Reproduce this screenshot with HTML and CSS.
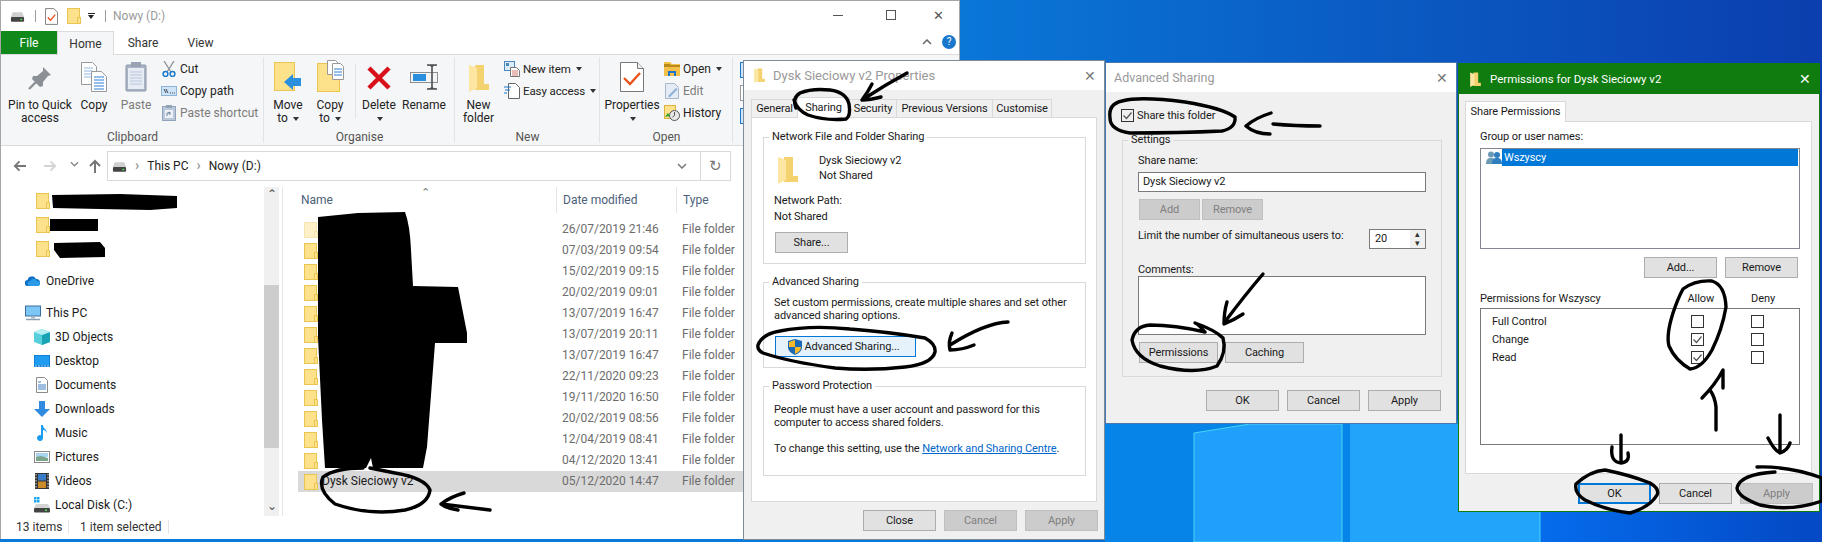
FILE: index.html
```html
<!DOCTYPE html>
<html lang="en">
<head>
  <meta charset="UTF-8">
  <title>Sharing a folder</title>
  <link rel="stylesheet" href="styles.css">
</head>
<body>
  <svg width="0" height="0" class="defs">
    <symbol id="i-folder" viewBox="0 0 14 16"><rect x=".5" y=".5" width="12" height="15" fill="#fde28b" stroke="#eac552"/><rect x="10.5" y="9.5" width="3" height="6" fill="#fde28b" stroke="#eac552"/></symbol>
    <symbol id="i-folder-big" viewBox="0 0 20 28"><path d="M6 1h9v19h5v6H6z" fill="#f4d26f"/><path d="M0 1l8 3v20l-8 4z" fill="#fce6a2"/></symbol>
    <symbol id="i-drive" viewBox="0 0 16 14"><path d="M3 3h10l2 5H1z" fill="#cfcfcf"/><rect x="1" y="8" width="14" height="5" rx="1" fill="#444"/><rect x="11" y="10" width="2" height="1.5" fill="#4be04b"/></symbol>
    <symbol id="i-doc-check" viewBox="0 0 14 18"><path d="M.5.5h9l4 4v13H.5z" fill="#fff" stroke="#777"/><path d="M3 10l3 3 5-6" fill="none" stroke="#e8541a" stroke-width="1.5"/></symbol>
    <symbol id="i-props" viewBox="0 0 24 30"><path d="M.5.5h17l6 6v23H.5z" fill="#fff" stroke="#777"/><path d="M17.5.5v6h6" fill="#eee" stroke="#777"/><path d="M4 16l6 6 10-11" fill="none" stroke="#e8541a" stroke-width="2.4"/></symbol>
    <symbol id="i-pin" viewBox="0 0 24 24"><path d="M15 1l8 8-3 1-5 6 0 4-3 1-8-8 1-3 4 0 6-5z" fill="#8a9096"/><path d="M8 16l-7 7" stroke="#8a9096" stroke-width="2.4"/></symbol>
    <symbol id="i-copy" viewBox="0 0 26 30"><path d="M.5.5h11l4 4v18H.5z" fill="#fff" stroke="#999"/><path d="M3 6h9M3 9h9M3 12h9M3 15h9" stroke="#8fb7e6"/><path d="M10.5 9.5h10l5 5v15h-15z" fill="#fff" stroke="#999"/><path d="M13 15h10M13 18h10M13 21h10M13 24h10M13 27h10" stroke="#2f7fd6"/></symbol>
    <symbol id="i-paste" viewBox="0 0 22 30"><rect x="1" y="3" width="20" height="26" rx="1" fill="#a9b3c6" stroke="#8d97a8"/><rect x="3" y="6" width="16" height="21" fill="#e6ebf4"/><rect x="6" y="0" width="10" height="5" fill="#9aa3b3"/><path d="M5 10h12M5 13h12M5 16h12M5 19h12M5 22h12" stroke="#b9c4d8"/></symbol>
    <symbol id="i-cut" viewBox="0 0 14 16"><path d="M2 0l7 11M12 0L5 11" stroke="#8a8f96" stroke-width="1.3"/><circle cx="3.5" cy="13" r="2.4" fill="none" stroke="#1a78cc" stroke-width="1.5"/><circle cx="10.5" cy="13" r="2.4" fill="none" stroke="#1a78cc" stroke-width="1.5"/></symbol>
    <symbol id="i-path" viewBox="0 0 16 10"><rect x=".5" y=".5" width="15" height="9" fill="#cfe4f7" stroke="#8bb4d8"/><path d="M3 3l2 4M5 3l2 4M9 7h1M11 7h1M13 7h1" stroke="#234" stroke-width=".9"/></symbol>
    <symbol id="i-shortcut" viewBox="0 0 14 16"><rect x=".5" y="1.500" width="13" height="14" fill="#b9c8da" stroke="#8fa3ba"/><rect x="4" y="0" width="6" height="3" fill="#93a3b6"/><rect x="3" y="5" width="8" height="8" fill="#eef2f7"/><path d="M5 11V8h3M6 8l2-1v3" stroke="#6c84a1" fill="none"/></symbol>
    <symbol id="i-move" viewBox="0 0 27 30"><rect x=".5" y=".5" width="20" height="28" fill="#fde28b" stroke="#eac552"/><path d="M10 20l9-8v4h8v8h-8v4z" fill="#2b8fe0"/></symbol>
    <symbol id="i-copyto" viewBox="0 0 27 32"><rect x=".5" y="3.500" width="22" height="28" fill="#fde28b" stroke="#eac552"/><path d="M10.500.5h8l3 3v11h-11z" fill="#fff" stroke="#999"/><path d="M15.500 3.500h8l3 3v13h-11z" fill="#fff" stroke="#999"/><path d="M17 9h8M17 12h8M17 15h8" stroke="#2f7fd6"/></symbol>
    <symbol id="i-delete" viewBox="0 0 26 26"><path d="M3 3l20 20M23 3L3 23" stroke="#d8101a" stroke-width="4.500"/></symbol>
    <symbol id="i-rename" viewBox="0 0 29 27"><rect x=".5" y="8.500" width="27" height="10" fill="#f4f4f4" stroke="#8a8f96"/><rect x="3" y="10" width="13" height="7" fill="#2b8fe0"/><path d="M17 1c2 0 5 0 5 2v20c0 2-3 2-5 2h10c-2 0-5 0-5-2V3c0-2 3-2 5-2z" fill="none" stroke="#4c5156" stroke-width="1.6"/></symbol>
    <symbol id="i-newitem" viewBox="0 0 16 16"><rect x=".5" y=".5" width="10" height="9" fill="#dcebf8" stroke="#4a88c0"/><rect x="2" y="2" width="3" height="3" fill="#4a88c0"/><path d="M6.500 6.500h6l3 3v6h-9z" fill="#fff" stroke="#777"/><path d="M8 10h6M8 12h6M8 14h6" stroke="#c7564a" stroke-width=".8"/></symbol>
    <symbol id="i-easy" viewBox="0 0 16 16"><path d="M4.500.5h7l4 4v11h-11z" fill="#fff" stroke="#666"/><path d="M0 4h7M1 7h5M0 10h3" stroke="#1a78cc" stroke-width="1.2"/></symbol>
    <symbol id="i-open" viewBox="0 0 16 14"><path d="M0 0h6l2 2h8v12H0z" fill="#f5c04a"/><path d="M0 2h6l1 1h9v2H0z" fill="#b98a1e"/><path d="M4 14V9h8v5h-2v-3H6v3z" fill="#1d78cc"/></symbol>
    <symbol id="i-edit" viewBox="0 0 14 16"><path d="M.5.5h9l4 4v11H.5z" fill="#e4ebf5" stroke="#a7b7cc"/><path d="M3 13l8-8 1.500 1.500-8 8z" fill="#8fb1d8"/></symbol>
    <symbol id="i-history" viewBox="0 0 16 16"><rect x=".5" y=".5" width="11" height="13" fill="#fde28b" stroke="#dcb43e"/><circle cx="10.500" cy="10.500" r="5" fill="#e8e8e8" stroke="#555"/><path d="M10.500 7v3.500l-2 1.500" stroke="#555" fill="none"/><path d="M1 12l3-4 2 3z" fill="#2aa52a"/></symbol>
    <symbol id="i-onedrive" viewBox="0 0 16 10"><path d="M3 10a3 3 0 0 1-.5-6A4.500 4.500 0 0 1 11 3a3.500 3.500 0 0 1 4 3.500A3.500 3.500 0 0 1 12.500 10z" fill="#0f6fc6"/><path d="M5 10a2.500 2.500 0 0 1 .5-5 3.500 3.500 0 0 1 6.500 0 2.500 2.500 0 0 1 3 3 2 2 0 0 1-2 2z" fill="#2b9be8"/></symbol>
    <symbol id="i-pc" viewBox="0 0 16 15"><rect x=".5" y=".5" width="15" height="10" fill="#7cc7f5" stroke="#3a6f9c"/><path d="M6 11h4v2H6z" fill="#aab7c2"/><path d="M1 14h14" stroke="#8aa0b3" stroke-width="1.500"/></symbol>
    <symbol id="i-cube" viewBox="0 0 16 16"><path d="M8 0l8 3v10l-8 3-8-3V3z" fill="#57d0dc"/><path d="M8 6l8-3v10l-8 3z" fill="#19a3b5"/><path d="M8 0l8 3-8 3-8-3z" fill="#b7eef2"/></symbol>
    <symbol id="i-desktop" viewBox="0 0 16 12"><rect width="16" height="12" fill="#0f7fd8"/><rect x="1" y="1" width="14" height="9" fill="#1f9bf0"/><path d="M1 11h14" stroke="#d8ecfa" stroke-dasharray="2 1" stroke-width=".8"/></symbol>
    <symbol id="i-docs" viewBox="0 0 12 16"><path d="M.5.5h8l3 3v12H.5z" fill="#fff" stroke="#8a8a8a"/><path d="M2 5h3M2 8h8M2 10h8M2 12h8" stroke="#3f7fc0"/></symbol>
    <symbol id="i-down" viewBox="0 0 16 16"><path d="M5 0h6v8h5l-8 8-8-8h5z" fill="#2f8ae0"/></symbol>
    <symbol id="i-music" viewBox="0 0 12 16"><path d="M5 0h2c0 4 4 4 4 8-1-2-2-3-4-3v8a3 3 0 1 1-2-2.800z" fill="#1a9cf0"/></symbol>
    <symbol id="i-pictures" viewBox="0 0 16 12"><rect x=".5" y=".5" width="15" height="11" fill="#fff" stroke="#8a8a8a"/><rect x="2" y="2" width="12" height="4" fill="#a9d3f0"/><path d="M2 6l5-1 7 2v3H2z" fill="#7ba58c"/></symbol>
    <symbol id="i-videos" viewBox="0 0 14 16"><rect width="14" height="16" fill="#333"/><rect x="3" y="1" width="8" height="6.500" fill="#3a7cc8"/><rect x="3" y="8.500" width="8" height="6.500" fill="#c98a28"/><path d="M1 1v14M13 1v14" stroke="#ddd" stroke-dasharray="1.500 1.500"/></symbol>
    <symbol id="i-disk" viewBox="0 0 16 16"><rect x="0" y="0" width="2.500" height="2.500" fill="#1ea7f0"/><rect x="3" y="0" width="2.500" height="2.500" fill="#1ea7f0"/><rect x="0" y="3" width="2.500" height="2.500" fill="#1ea7f0"/><rect x="3" y="3" width="2.500" height="2.500" fill="#1ea7f0"/><path d="M2 7h12l2 4H0z" fill="#d4d4d4"/><rect y="11" width="16" height="4.500" rx="1" fill="#444"/><rect x="11" y="12.500" width="2" height="1.500" fill="#4be04b"/></symbol>
    <symbol id="i-shield" viewBox="0 0 14 16"><path d="M7 0l7 2v6c0 4-3 6-7 8-4-2-7-4-7-8V2z" fill="#1c69b8"/><path d="M7 1v7H1V3zM7 8h6c0 3-2 5-6 7z" fill="#f5b92a"/></symbol>
    <symbol id="i-users" viewBox="0 0 16 13"><circle cx="5" cy="3.500" r="3" fill="#6a9bb5"/><path d="M0 13c0-5 2-6 5-6s5 1 5 6z" fill="#6a9bb5"/><circle cx="11" cy="4" r="3" fill="#2f7fc0"/><path d="M6 13c0-5 2-6 5-6s5 1 5 6z" fill="#2f7fc0"/></symbol>
    <symbol id="i-tick" viewBox="0 0 11 11"><path d="M1.500 5.500l3 3 5-6" fill="none" stroke="#555" stroke-width="1.200"/></symbol>
    <symbol id="i-arrow-l" viewBox="0 0 14 12"><path d="M14 6H2M7 1L2 6l5 5" fill="none" stroke="currentColor" stroke-width="2"/></symbol>
    <symbol id="i-arrow-r" viewBox="0 0 14 12"><path d="M0 6h12M7 1l5 5-5 5" fill="none" stroke="currentColor" stroke-width="2"/></symbol>
    <symbol id="i-arrow-u" viewBox="0 0 12 14"><path d="M6 14V2M1 7l5-5 5 5" fill="none" stroke="currentColor" stroke-width="2"/></symbol>
    <symbol id="i-chev-d" viewBox="0 0 10 6"><path d="M1 1l4 4 4-4" fill="none" stroke="currentColor" stroke-width="1.500"/></symbol>
  </svg>

  <svg class="wallpaper" viewBox="0 0 1822 542">
    <defs>
      <linearGradient id="sky"><stop offset=".5" stop-color="#0a7ada"/><stop offset="1" stop-color="#0b3eae"/></linearGradient>
      <linearGradient id="floor"><stop offset="0" stop-color="#056cec"/><stop offset="1" stop-color="#0448c4"/></linearGradient>
    </defs>
    <rect width="1822" height="542" fill="url(#sky)"/>
    <rect x="1105" y="420" width="436" height="122" fill="#0784e8"/>
    <rect x="1540" y="500" width="282" height="42" fill="url(#floor)"/>
    <path d="M1194 433L1250 424H1342V542H1194z" fill="#20a0fa" stroke="#45d6f5"/>
    <path d="M1350 424H1540V542H1350z" fill="#22a4fb"/>
    <path d="M1540 424V542" stroke="#45d6f5"/>
  </svg>

  <div class="window explorer">
    <div class="ex-title">
      <svg class="ico ico-drive"><use href="#i-drive"/></svg>
      <span class="qat-sep"></span>
      <svg class="ico ico-doc"><use href="#i-doc-check"/></svg>
      <svg class="ico ico-qfolder"><use href="#i-folder"/></svg>
      <span class="qat-down"></span>
      <span class="qat-sep"></span>
      <span class="ex-name">Nowy (D:)</span>
      <div class="ex-controls">
        <span class="ctl-min"></span>
        <span class="ctl-max"></span>
        <span class="ctl-close">✕</span>
      </div>
    </div>

    <div class="ex-tabs">
      <div class="ex-tab file">File</div>
      <div class="ex-tab home">Home</div>
      <div class="ex-tab share">Share</div>
      <div class="ex-tab view">View</div>
      <svg class="ribbon-toggle"><use href="#i-chev-d"/></svg>
      <span class="help-dot">?</span>
    </div>

    <div class="ribbon">
      <div class="rgroup g-clipboard">
        <div class="rbody">
          <div class="big w-pin"><svg class="big-ico"><use href="#i-pin" x="4" y="4" width="24" height="24"/></svg><span>Pin to Quick</span><span>access</span></div>
          <div class="big w-copy"><svg class="big-ico"><use href="#i-copy" x="3" y="0" width="26" height="30"/></svg><span>Copy</span></div>
          <div class="big w-paste off"><svg class="big-ico"><use href="#i-paste" x="5" y="0" width="22" height="30"/></svg><span>Paste</span></div>
          <div class="smalls">
            <div class="small"><svg class="sm-ico"><use href="#i-cut"/></svg>Cut</div>
            <div class="small"><svg class="sm-ico"><use href="#i-path"/></svg>Copy path</div>
            <div class="small off"><svg class="sm-ico"><use href="#i-shortcut"/></svg>Paste shortcut</div>
          </div>
        </div>
        <div class="rlabel">Clipboard</div>
      </div>

      <div class="rgroup g-organise">
        <div class="rbody">
          <div class="big w-move"><svg class="big-ico"><use href="#i-move" x="2" y="0" width="27" height="30"/></svg><span>Move</span><span>to <i class="caret"></i></span></div>
          <div class="big w-copyto"><svg class="big-ico"><use href="#i-copyto" x="3" y="-2" width="27" height="32"/></svg><span>Copy</span><span>to <i class="caret"></i></span></div>
          <span class="rsep"></span>
          <div class="big w-delete"><svg class="big-ico"><use href="#i-delete" x="3" y="3" width="26" height="26"/></svg><span>Delete</span><span><i class="caret"></i></span></div>
          <div class="big w-rename"><svg class="big-ico"><use href="#i-rename" x="2" y="2" width="29" height="27"/></svg><span>Rename</span></div>
        </div>
        <div class="rlabel">Organise</div>
      </div>

      <div class="rgroup g-new">
        <div class="rbody">
          <div class="big w-newfolder"><svg class="big-ico"><use href="#i-folder-big" x="6" y="2" width="20" height="28"/></svg><span>New</span><span>folder</span></div>
          <div class="smalls">
            <div class="small"><svg class="sm-ico"><use href="#i-newitem"/></svg>New item <i class="caret"></i></div>
            <div class="small"><svg class="sm-ico"><use href="#i-easy"/></svg>Easy access <i class="caret"></i></div>
          </div>
        </div>
        <div class="rlabel">New</div>
      </div>

      <div class="rgroup g-open">
        <div class="rbody">
          <div class="big w-props"><svg class="big-ico"><use href="#i-props" x="4" y="0" width="24" height="30"/></svg><span>Properties</span><span><i class="caret"></i></span></div>
          <div class="smalls">
            <div class="small"><svg class="sm-ico"><use href="#i-open"/></svg>Open <i class="caret"></i></div>
            <div class="small off"><svg class="sm-ico"><use href="#i-edit"/></svg>Edit</div>
            <div class="small"><svg class="sm-ico"><use href="#i-history"/></svg>History</div>
          </div>
        </div>
        <div class="rlabel">Open</div>
      </div>

      <div class="rgroup g-select">
        <span class="sel-box blue"></span>
        <span class="sel-box"></span>
        <span class="sel-box blue"></span>
      </div>
    </div>

    <div class="addressbar">
      <svg class="nav-btn back"><use href="#i-arrow-l"/></svg>
      <svg class="nav-btn fwd"><use href="#i-arrow-r"/></svg>
      <svg class="nav-btn hist"><use href="#i-chev-d"/></svg>
      <svg class="nav-btn up"><use href="#i-arrow-u"/></svg>
      <div class="address">
        <svg class="ico ico-drive"><use href="#i-drive"/></svg>
        <span class="crumb-sep">›</span>
        <span>This PC</span>
        <span class="crumb-sep">›</span>
        <span>Nowy (D:)</span>
        <svg class="addr-down"><use href="#i-chev-d"/></svg>
        <span class="addr-refresh">↻</span>
      </div>
    </div>

    <div class="ex-main">
      <div class="sidebar">
        <div class="nav-list">
          <div class="nav-row deep"><svg class="nav-ico"><use href="#i-folder"/></svg></div>
          <div class="nav-row deep"><svg class="nav-ico"><use href="#i-folder"/></svg></div>
          <div class="nav-row deep"><svg class="nav-ico"><use href="#i-folder"/></svg></div>
          <div class="nav-row top gap"><svg class="nav-ico"><use href="#i-onedrive"/></svg>OneDrive</div>
          <div class="nav-row top gap"><svg class="nav-ico"><use href="#i-pc"/></svg>This PC</div>
          <div class="nav-row child"><svg class="nav-ico"><use href="#i-cube"/></svg>3D Objects</div>
          <div class="nav-row child"><svg class="nav-ico"><use href="#i-desktop"/></svg>Desktop</div>
          <div class="nav-row child"><svg class="nav-ico"><use href="#i-docs"/></svg>Documents</div>
          <div class="nav-row child"><svg class="nav-ico"><use href="#i-down"/></svg>Downloads</div>
          <div class="nav-row child"><svg class="nav-ico"><use href="#i-music"/></svg>Music</div>
          <div class="nav-row child"><svg class="nav-ico"><use href="#i-pictures"/></svg>Pictures</div>
          <div class="nav-row child"><svg class="nav-ico"><use href="#i-videos"/></svg>Videos</div>
          <div class="nav-row child"><svg class="nav-ico"><use href="#i-disk"/></svg>Local Disk (C:)</div>
        </div>
        <div class="scrollbar">
          <span class="sb-arrow">⌃</span>
          <div class="sb-track"><div class="sb-thumb"></div></div>
          <span class="sb-arrow">⌄</span>
        </div>
      </div>

      <div class="filelist">
        <div class="file-head">
          <div class="col-name">Name<span class="sort">⌃</span></div>
          <div class="col-date">Date modified</div>
          <div class="col-type">Type</div>
        </div>
        <div class="file-row faded"><div class="f-name"><svg class="f-ico"><use href="#i-folder"/></svg></div><div class="f-date">26/07/2019 21:46</div><div class="f-type">File folder</div></div>
        <div class="file-row"><div class="f-name"><svg class="f-ico"><use href="#i-folder"/></svg></div><div class="f-date">07/03/2019 09:54</div><div class="f-type">File folder</div></div>
        <div class="file-row"><div class="f-name"><svg class="f-ico"><use href="#i-folder"/></svg></div><div class="f-date">15/02/2019 09:15</div><div class="f-type">File folder</div></div>
        <div class="file-row"><div class="f-name"><svg class="f-ico"><use href="#i-folder"/></svg></div><div class="f-date">20/02/2019 09:01</div><div class="f-type">File folder</div></div>
        <div class="file-row"><div class="f-name"><svg class="f-ico"><use href="#i-folder"/></svg></div><div class="f-date">13/07/2019 16:47</div><div class="f-type">File folder</div></div>
        <div class="file-row"><div class="f-name"><svg class="f-ico"><use href="#i-folder"/></svg></div><div class="f-date">13/07/2019 20:11</div><div class="f-type">File folder</div></div>
        <div class="file-row"><div class="f-name"><svg class="f-ico"><use href="#i-folder"/></svg></div><div class="f-date">13/07/2019 16:47</div><div class="f-type">File folder</div></div>
        <div class="file-row"><div class="f-name"><svg class="f-ico"><use href="#i-folder"/></svg></div><div class="f-date">22/11/2020 09:23</div><div class="f-type">File folder</div></div>
        <div class="file-row"><div class="f-name"><svg class="f-ico"><use href="#i-folder"/></svg></div><div class="f-date">19/11/2020 16:50</div><div class="f-type">File folder</div></div>
        <div class="file-row"><div class="f-name"><svg class="f-ico"><use href="#i-folder"/></svg></div><div class="f-date">20/02/2019 08:56</div><div class="f-type">File folder</div></div>
        <div class="file-row"><div class="f-name"><svg class="f-ico"><use href="#i-folder"/></svg></div><div class="f-date">12/04/2019 08:41</div><div class="f-type">File folder</div></div>
        <div class="file-row"><div class="f-name"><svg class="f-ico"><use href="#i-folder"/></svg></div><div class="f-date">04/12/2020 13:41</div><div class="f-type">File folder</div></div>
        <div class="file-row selected"><div class="f-name"><svg class="f-ico"><use href="#i-folder"/></svg>Dysk Sieciowy v2</div><div class="f-date">05/12/2020 14:47</div><div class="f-type">File folder</div></div>
      </div>
    </div>

    <div class="statusbar">
      <span class="st-count">13 items</span>
      <span class="st-sel">1 item selected</span>
    </div>
  </div>

  <!-- properties -->
  <div class="window dialog props">
    <div class="dlg-title">
      <svg class="dlg-ico"><use href="#i-folder-big"/></svg>
      <span class="dlg-name">Dysk Sieciowy v2 Properties</span>
      <span class="dlg-x">✕</span>
    </div>
    <div class="dlg-body">
      <div class="tabs">
        <div class="tab t-general">General</div>
        <div class="tab t-sharing active">Sharing</div>
        <div class="tab t-security">Security</div>
        <div class="tab t-previous">Previous Versions</div>
        <div class="tab t-customise">Customise</div>
      </div>
      <div class="page props-page">
        <fieldset class="group g-network">
          <legend>Network File and Folder Sharing</legend>
          <div class="net-body">
            <div class="net-file">
              <svg class="net-ico"><use href="#i-folder-big"/></svg>
              <div class="net-text"><div>Dysk Sieciowy v2</div><div>Not Shared</div></div>
            </div>
            <div class="net-path"><div>Network Path:</div><div>Not Shared</div></div>
            <button class="btn share-btn">Share...</button>
          </div>
        </fieldset>
        <fieldset class="group g-advanced">
          <legend>Advanced Sharing</legend>
          <div class="adv-body">
            <div>Set custom permissions, create multiple shares and set other</div>
            <div>advanced sharing options.</div>
            <button class="btn adv-btn"><svg class="shield"><use href="#i-shield"/></svg>Advanced Sharing...</button>
          </div>
        </fieldset>
        <fieldset class="group g-password">
          <legend>Password Protection</legend>
          <div class="pw-body">
            <div>People must have a user account and password for this</div>
            <div>computer to access shared folders.</div>
            <div class="pw-link">To change this setting, use the <a class="link">Network and Sharing Centre</a>.</div>
          </div>
        </fieldset>
      </div>
      <div class="dlg-foot">
        <button class="btn">Close</button>
        <button class="btn disabled">Cancel</button>
        <button class="btn disabled">Apply</button>
      </div>
    </div>
  </div>

  <!-- advanced sharing -->
  <div class="window dialog advanced">
    <div class="dlg-title short">
      <span class="dlg-name">Advanced Sharing</span>
      <span class="dlg-x">✕</span>
    </div>
    <div class="dlg-body adv-dlg">
      <div class="check-row"><span class="check"><svg class="tick"><use href="#i-tick"/></svg></span>Share this folder</div>
      <fieldset class="group g-settings">
        <legend>Settings</legend>
        <div class="settings-body">
          <div class="lbl">Share name:</div>
          <div class="field">Dysk Sieciowy v2</div>
          <div class="btn-row pair">
            <button class="btn disabled narrow">Add</button>
            <button class="btn disabled narrow">Remove</button>
          </div>
          <div class="limit-row">
            <div class="lbl">Limit the number of simultaneous users to:</div>
            <div class="spin"><span class="spin-val">20</span><div class="spin-btns"><span>▴</span><span>▾</span></div></div>
          </div>
          <div class="lbl comments-lbl">Comments:</div>
          <div class="field area"></div>
          <div class="btn-row perm">
            <button class="btn wide">Permissions</button>
            <button class="btn wide">Caching</button>
          </div>
        </div>
      </fieldset>
      <div class="dlg-foot">
        <button class="btn">OK</button>
        <button class="btn">Cancel</button>
        <button class="btn">Apply</button>
      </div>
    </div>
  </div>

  <!-- permissions -->
  <div class="window dialog perms">
    <div class="dlg-title green">
      <svg class="dlg-ico small-ico"><use href="#i-folder-big"/></svg>
      <span class="dlg-name">Permissions for Dysk Sieciowy v2</span>
      <span class="dlg-x">✕</span>
    </div>
    <div class="dlg-body">
      <div class="tabs perm-tabs"><div class="tab active t-share">Share Permissions</div></div>
      <div class="page perm-page">
        <div class="lbl">Group or user names:</div>
        <div class="listbox">
          <div class="list-item"><svg class="users"><use href="#i-users"/></svg><span class="list-sel">Wszyscy</span></div>
        </div>
        <div class="list-btns">
          <button class="btn">Add...</button>
          <button class="btn">Remove</button>
        </div>
        <div class="perm-head">
          <span class="perm-for">Permissions for Wszyscy</span>
          <span>Allow</span>
          <span class="deny">Deny</span>
        </div>
        <div class="perm-box">
          <div class="perm-row"><span class="perm-name">Full Control</span><span class="check"></span><span class="check"></span></div>
          <div class="perm-row"><span class="perm-name">Change</span><span class="check"><svg class="tick"><use href="#i-tick"/></svg></span><span class="check"></span></div>
          <div class="perm-row"><span class="perm-name">Read</span><span class="check"><svg class="tick"><use href="#i-tick"/></svg></span><span class="check"></span></div>
        </div>
      </div>
      <div class="dlg-foot perm-foot">
        <button class="btn default">OK</button>
        <button class="btn">Cancel</button>
        <button class="btn disabled">Apply</button>
      </div>
    </div>
  </div>

  <!-- marker scribbles on top of the screenshot -->
  <svg class="ink" viewBox="0 0 1822 542">
    <g class="ink-fill">
      <path d="M318 217L358 213 405 212Q410 225 411 250L413 286 458 287 467 333V343H435L427 447 423 468H373L371 458 366 468H325L322 420 318 337z"/>
      <path d="M52 195L120 194 177 196V208L150 210 100 209 53 208z"/>
      <path d="M50 219H98V231H50z"/>
      <path d="M54 243L100 242 105 248V257L60 258 54 250z"/>
    </g>
    <g class="ink-line">
      <path d="M796 108Q792 98 800 93Q812 88 830 90Q846 92 849 104Q851 116 846 119Q826 121 808 115Q797 110 794 100"/>
      <path d="M907 73Q885 85 862 100M872 84Q868 92 862 100Q870 100 881 97"/>
      <path d="M758 345Q762 334 780 331Q810 325 850 329Q890 332 925 338Q936 344 935 352Q932 364 905 367Q870 371 835 368Q790 362 763 353Q757 350 758 345"/>
      <path d="M1008 322Q985 323 950 345M952 333Q948 342 950 350Q962 350 974 345"/>
      <path d="M363 468Q335 468 323 477Q317 490 335 504Q370 516 405 510Q428 505 430 490Q425 478 395 473Q380 470 370 468"/>
      <path d="M490 510Q465 507 441 504M464 493Q450 497 441 504Q448 509 458 510"/>

      <path d="M1110 118Q1108 104 1122 101Q1140 96 1185 102Q1222 108 1235 117Q1236 128 1222 131Q1180 133 1130 133Q1110 130 1110 118"/>
      <path d="M1320 126Q1295 126 1273 124M1271 113Q1255 118 1246 126Q1255 134 1270 134"/>
      <path d="M1263 274Q1245 295 1224 323M1227 302Q1224 312 1224 324Q1234 320 1243 314"/>
      <path d="M1205 332Q1198 324 1195 323Q1215 330 1223 338Q1227 352 1217 366Q1195 375 1160 366Q1135 358 1132 340Q1135 326 1150 325Q1175 325 1205 332"/>

      <path d="M1683 289Q1695 280 1712 281Q1725 285 1726 307Q1722 330 1712 350Q1702 368 1690 369Q1675 360 1669 346Q1666 335 1673 313Q1678 298 1683 289"/>
      <path d="M1716 430V407Q1715 397 1710 390M1702 398Q1715 385 1723 370V388"/>
      <path d="M1621 435V462M1612 447Q1610 462 1621 463Q1630 462 1628 453"/>
      <path d="M1780 415V453M1768 438Q1774 450 1780 453Q1788 450 1790 443"/>
      <path d="M1576 484Q1590 471 1605 470Q1630 475 1650 483Q1660 489 1657 495Q1650 507 1630 513Q1605 510 1585 500Q1574 493 1576 484"/>
      <path d="M1757 467Q1790 466 1822 478V501Q1790 512 1760 505Q1738 497 1737 488Q1740 474 1775 472"/>
    </g>
  </svg>
</body>
</html>
```

FILE: styles.css
```css
* {
  box-sizing: border-box;
}

html, body {
  margin: 0;
  padding: 0;
}

body {
  position: relative;
  width: 1822px;
  height: 542px;
  overflow: hidden;
  font-family: Roboto, "Liberation Sans", sans-serif;
  font-size: 12px;
  color: #1a1a1a;
  background: #0a6fd0;
}

.defs {
  position: absolute;
}

.wallpaper, .ink {
  position: absolute;
  left: 0;
  top: 0;
  width: 1822px;
  height: 542px;
}

.ink {
  z-index: 10;
}

.ink-fill path {
  fill: #000;
}

.ink-line path {
  fill: none;
  stroke: #000;
  stroke-width: 3.4;
  stroke-linecap: round;
  stroke-linejoin: round;
}

.window {
  position: absolute;
  background: #fff;
}

/* explorer */
.explorer {
  left: 0;
  top: 0;
  width: 960px;
  height: 539px;
  display: flex;
  flex-direction: column;
  border: 1px solid #a6a6a6;
  border-bottom: 0;
}

.ex-title {
  height: 30px;
  display: flex;
  align-items: center;
  padding-left: 9px;
  flex-shrink: 0;
}

.ico {
  display: block;
}

.ico-drive {
  width: 15px;
  height: 14px;
}

.ico-doc {
  width: 13px;
  height: 17px;
  margin-left: 9px;
}

.ico-qfolder {
  width: 14px;
  height: 16px;
  margin-left: 9px;
}

.qat-sep {
  width: 1px;
  height: 12px;
  background: #9a9a9a;
  margin-left: 10px;
}

.qat-down {
  width: 7px;
  height: 6px;
  margin-left: 7px;
  border-top: 1px solid #222;
  border-bottom: 4px solid transparent;
  position: relative;
}

.qat-down::after {
  content: "";
  position: absolute;
  left: 0;
  top: 1px;
  border: 3.5px solid transparent;
  border-top: 4px solid #222;
}

.ex-name {
  margin-left: 7px;
  font-size: 12px;
  color: #9a9a9a;
}

.ex-controls {
  margin-left: auto;
  display: flex;
  align-items: center;
  width: 126px;
  margin-top: -2px;
  color: #555;
}

.ctl-min {
  width: 10px;
  height: 1px;
  background: #555;
}

.ctl-max {
  width: 10px;
  height: 10px;
  border: 1px solid #555;
  margin-left: 43px;
}

.ctl-close {
  margin-left: 37px;
  font-size: 13px;
}

.ex-tabs {
  height: 23px;
  display: flex;
  flex-shrink: 0;
  position: relative;
}

.ex-tab {
  line-height: 25px;
  text-align: center;
  color: #333;
}

.ex-tab.file {
  width: 56px;
  background: #10891a;
  color: #fff;
  margin-right: 0;
}

.ex-tab.home {
  width: 57px;
  height: 24px;
  background: #f5f6f7;
  border: 1px solid #dadbdc;
  border-bottom: 0;
  position: relative;
  z-index: 1;
}

.ex-tab.share {
  width: 58px;
}

.ex-tab.view {
  width: 57px;
}

.ribbon-toggle {
  position: absolute;
  left: 921px;
  top: 8px;
  width: 10px;
  height: 6px;
  color: #666;
  transform: rotate(180deg);
}

.help-dot {
  position: absolute;
  left: 941px;
  top: 4px;
  width: 14px;
  height: 14px;
  border-radius: 50%;
  background: #1a78cc;
  color: #fff;
  font-size: 10px;
  line-height: 14px;
  text-align: center;
}

.ribbon {
  height: 92px;
  display: flex;
  flex-shrink: 0;
  background: #f5f6f7;
  border-top: 1px solid #dadbdc;
  border-bottom: 1px solid #dadbdc;
}

.rgroup {
  display: flex;
  flex-direction: column;
  position: relative;
  padding-top: 3px;
}

.rgroup::after {
  content: "";
  position: absolute;
  right: 0;
  top: 2px;
  bottom: 2px;
  width: 1px;
  background: #e1e3e6;
}

.g-clipboard { width: 263px; }
.g-organise { width: 191px; }
.g-new { width: 145px; }
.g-open { width: 133px; }
.g-select { flex: 1; padding: 7px 0 0 7px; gap: 7px; }
.g-select::after { display: none; }

.sel-box {
  width: 14px;
  height: 16px;
  border: 1px solid #999;
  background: #fff;
}

.sel-box.blue {
  border-color: #1a78cc;
  background: #cfe4f7;
}

.rbody {
  flex: 1;
  display: flex;
}

.rlabel {
  height: 20px;
  line-height: 24px;
  text-align: center;
  color: #555;
}

.big {
  display: flex;
  flex-direction: column;
  align-items: center;
  flex-shrink: 0;
  line-height: 13px;
  white-space: nowrap;
  color: #222;
}

.big-ico {
  width: 32px;
  height: 41px;
  overflow: visible;
  transform: translateY(4px);
  display: block;
}

.off {
  color: #7b7b7b;
}

.w-pin { width: 70px; margin-left: 4px; }
.w-copy { width: 38px; }
.w-paste { width: 46px; }
.w-move { width: 44px; margin-left: 2px; }
.w-copyto { width: 40px; }
.w-delete { width: 46px; }
.w-rename { width: 44px; }
.w-newfolder { width: 47px; }
.w-props { width: 64px; }

.rsep {
  width: 1px;
  height: 54px;
  margin: 6px 0 0 5px;
  background: #e1e3e6;
}

.smalls {
  display: flex;
  flex-direction: column;
  padding-left: 2px;
}

.w-props + .smalls {
  padding-left: 0;
}

.small {
  height: 22px;
  display: flex;
  align-items: center;
  gap: 3px;
  white-space: nowrap;
  color: #222;
}

.g-new .small {
  font-size: 11.5px;
  letter-spacing: -.1px;
}

.small.off {
  color: #7b7b7b;
}

.sm-ico {
  width: 16px;
  height: 16px;
  flex-shrink: 0;
}

.caret {
  display: inline-block;
  width: 0;
  height: 0;
  margin-left: 2px;
  border: 3.5px solid transparent;
  border-top: 4px solid #333;
  border-bottom: 0;
  vertical-align: middle;
}

.addressbar {
  height: 35px;
  flex-shrink: 0;
  display: flex;
  align-items: flex-start;
  padding: 5px 228px 0 0;
  position: relative;
}

.nav-btn {
  position: absolute;
  top: 14px;
  width: 13px;
  height: 12px;
  color: #777;
}

.nav-btn.back { left: 12px; }
.nav-btn.fwd { left: 43px; color: #d4d4d4; }
.nav-btn.hist { left: 69px; top: 15px; width: 9px; height: 6px; color: #888; }
.nav-btn.up { left: 88px; width: 12px; height: 14px; top: 13px; }

.address {
  margin-left: 106px;
  flex: 1;
  height: 30px;
  border: 1px solid #d9d9d9;
  display: flex;
  align-items: center;
  padding-left: 4px;
  gap: 8px;
  color: #222;
}

.crumb-sep {
  color: #888;
  font-size: 14px;
  line-height: 14px;
  margin-top: -2px;
}

.addr-down {
  margin-left: auto;
  width: 10px;
  height: 6px;
  color: #777;
}

.addr-refresh {
  width: 30px;
  text-align: center;
  margin-left: 5px;
  height: 28px;
  line-height: 28px;
  border-left: 1px solid #d9d9d9;
  color: #777;
  font-size: 15px;
}

.ex-main {
  height: 335px;
  display: flex;
  padding-top: 6px;
  flex-shrink: 0;
}

.sidebar {
  width: 282px;
  display: flex;
  border-right: 1px solid #e5e5e5;
  height: 329px;
}

.nav-list {
  width: 263px;
  padding-top: 2px;
}

.nav-row {
  height: 24px;
  display: flex;
  align-items: center;
  white-space: nowrap;
  color: #1a1a1a;
}

.nav-ico {
  width: 16px;
  height: 16px;
  flex-shrink: 0;
  margin-right: 5px;
}

.nav-row.deep { padding-left: 34px; }
.nav-row.top { padding-left: 24px; }
.nav-row.child { padding-left: 33px; }
.nav-row.gap { margin-top: 8px; }

.scrollbar {
  width: 15px;
  background: #f0f0f0;
  display: flex;
  flex-direction: column;
  color: #555;
  font-size: 12px;
  line-height: 15px;
  text-align: center;
}

.sb-arrow {
  height: 17px;
  flex-shrink: 0;
}

.sb-track {
  flex: 1;
  padding-top: 81px;
}

.sb-thumb {
  height: 163px;
  background: #cdcdcd;
}

.filelist {
  flex: 1;
  margin-left: 15px;
  overflow: hidden;
}

.file-head, .file-row {
  display: grid;
  grid-template-columns: 258px 120px 1fr;
}

.file-head {
  height: 26px;
  margin-bottom: 6px;
  line-height: 26px;
  color: #4c607a;
}

.col-name {
  padding-left: 3px;
  position: relative;
}

.sort {
  position: absolute;
  left: 123px;
  top: -7px;
  color: #777;
  font-size: 11px;
}

.col-date, .col-type {
  padding-left: 6px;
  border-left: 1px solid #e5e5e5;
}

.file-row {
  height: 21px;
  line-height: 21px;
  color: #6d6d6d;
}

.file-row.selected {
  background: #d9d9d9;
}

.f-name {
  display: flex;
  align-items: center;
  padding-left: 6px;
  color: #1a1a1a;
}

.f-ico {
  width: 14px;
  height: 16px;
  margin-right: 4px;
}

.f-date, .f-type {
  padding-left: 6px;
}

.faded .f-ico {
  opacity: .45;
}

.statusbar {
  height: 22px;
  display: flex;
  align-items: center;
  flex-shrink: 0;
  color: #333;
}

.st-count {
  padding-left: 15px;
  width: 68px;
  border-right: 1px solid #e5e5e5;
}

.st-sel {
  padding-left: 11px;
  width: 100px;
  border-right: 1px solid #e5e5e5;
}

/* dialogs */
.dialog {
  display: flex;
  flex-direction: column;
  border: 1px solid #7f8a99;
  font-size: 11px;
  letter-spacing: -.1px;
}

.props {
  left: 743px;
  top: 60px;
  width: 362px;
  height: 480px;
}

.advanced {
  left: 1105px;
  top: 62px;
  width: 352px;
  height: 362px;
  border-color: #4a78ad;
}

.perms {
  left: 1458px;
  top: 63px;
  width: 362px;
  height: 449px;
  border-color: #107c10;
}

.dlg-title {
  height: 29px;
  display: flex;
  align-items: center;
  padding-left: 10px;
  flex-shrink: 0;
  background: #fff;
  color: #999;
  letter-spacing: 0;
}

.dlg-title.short {
  padding-left: 8px;
}

.dlg-title.green {
  height: 30px;
  background: #107c10;
  color: #fff;
  padding-left: 11px;
}

.dlg-ico {
  width: 11px;
  height: 15px;
  margin-right: 8px;
}

.small-ico {
  margin-right: 9px;
}

.dlg-name {
  font-size: 12.5px;
}

.props .dlg-name {
  font-size: 13px;
}

.perms .dlg-name {
  font-size: 11.5px;
}

.dlg-x {
  margin-left: auto;
  margin-right: 8px;
  font-size: 14px;
  color: #777;
}

.green .dlg-x {
  color: #fff;
}

.dlg-body {
  flex: 1;
  background: #f0f0f0;
  display: flex;
  flex-direction: column;
}

.tabs {
  display: flex;
  padding: 9px 0 0 8px;
  height: 27px;
  flex-shrink: 0;
}

.tab {
  height: 19px;
  line-height: 17px;
  text-align: center;
  white-space: nowrap;
  border: 1px solid #d9d9d9;
  border-bottom: 0;
  background: #f0f0f0;
  margin-left: -1px;
}

.tab.active {
  height: 21px;
  margin-top: -2px;
  background: #fff;
  position: relative;
  z-index: 1;
  line-height: 19px;
}

.t-general { width: 47px; }
.t-sharing { width: 53px; }
.t-security { width: 48px; }
.t-previous { width: 97px; }
.t-customise { width: 60px; }

.page {
  background: #fff;
  border: 1px solid #d9d9d9;
}

.props-page {
  height: 385px;
  margin: 0 7px;
  padding: 11px 0 0 11px;
}

.group {
  border: 1px solid #d9d9d9;
  margin: 0;
  padding: 0;
  width: 323px;
  min-width: 0;
}

.group legend {
  margin-left: 5px;
  padding: 0 3px;
  line-height: 16px;
}

.g-network { height: 135px; }
.g-advanced { height: 94px; margin-top: 10px; }
.g-password { height: 98px; margin-top: 10px; }

.net-body {
  padding: 8px 0 0 10px;
}

.net-file {
  display: flex;
  line-height: 15px;
  height: 30px;
}

.net-ico {
  width: 20px;
  height: 28px;
  margin: 3px 21px 0 4px;
}

.net-path {
  margin-top: 10px;
  line-height: 16px;
}

.btn {
  width: 73px;
  height: 21px;
  padding: 0;
  border: 1px solid #adadad;
  background: #e1e1e1;
  font: inherit;
  letter-spacing: inherit;
  color: #1a1a1a;
  flex-shrink: 0;
}

.btn.disabled {
  background: #ccc;
  border-color: #bfbfbf;
  color: #7f7f7f;
}

.btn.default {
  border: 2px solid #0078d7;
}

.share-btn {
  display: block;
  margin: 7px 0 0 1px;
}

.adv-body {
  padding: 6px 0 0 10px;
  line-height: 13px;
}

.adv-btn {
  display: flex;
  align-items: center;
  justify-content: center;
  width: 141px;
  margin: 14px 0 0 1px;
  border-color: #0078d7;
  background: #e5f1fb;
  padding-right: 3px;
}

.shield {
  width: 14px;
  height: 16px;
  margin-right: 2px;
}

.pw-body {
  padding: 9px 0 0 10px;
  line-height: 13px;
}

.pw-link {
  margin-top: 13px;
}

.link {
  color: #0066cc;
  text-decoration: underline;
}

.dlg-foot {
  display: flex;
  justify-content: flex-end;
  gap: 8px;
  padding: 8px 6px 0 0;
}

.adv-dlg {
  padding-left: 15px;
}

.check-row {
  display: flex;
  align-items: center;
  gap: 3px;
  height: 16px;
  margin-top: 15px;
}

.check {
  width: 13px;
  height: 13px;
  flex-shrink: 0;
  border: 1px solid #333;
  background: #fff;
  display: block;
}

.check-row .check {
  background: #f0f0f0;
}

.tick {
  width: 11px;
  height: 11px;
  display: block;
}

.g-settings {
  width: 320px;
  height: 245px;
  margin: 9px 0 0 1px;
}

.settings-body {
  padding: 6px 0 0 15px;
}

.lbl {
  line-height: 14px;
}

.field {
  width: 288px;
  height: 20px;
  line-height: 18px;
  margin-top: 4px;
  padding-left: 4px;
  border: 1px solid #7a7a7a;
  background: #fff;
}

.btn-row {
  display: flex;
  margin-left: 1px;
}

.btn-row.pair {
  margin-top: 7px;
  gap: 2px;
}

.narrow {
  width: 61px;
}

.limit-row {
  display: flex;
  justify-content: space-between;
  width: 288px;
  margin-top: 9px;
}

.spin {
  width: 57px;
  height: 20px;
  border: 1px solid #7a7a7a;
  background: #fff;
  display: flex;
  justify-content: space-between;
  line-height: 18px;
  padding-left: 5px;
}

.spin-btns {
  width: 15px;
  background: #f0f0f0;
  font-size: 9px;
  line-height: 9px;
  text-align: center;
  color: #333;
  display: flex;
  flex-direction: column;
}

.comments-lbl {
  margin-top: 14px;
}

.area {
  height: 59px;
  margin-top: -1px;
}

.btn-row.perm {
  margin-top: 7px;
  gap: 7px;
}

.wide {
  width: 79px;
}

.advanced .dlg-foot {
  padding: 13px 15px 0 0;
}

.perm-tabs {
  height: 27px;
  padding: 7px 0 0 7px;
}

.perm-tabs .tab.active {
  margin-top: 0;
  line-height: 19px;
}

.t-share {
  width: 101px;
}

.perm-page {
  height: 353px;
  margin: 0 7px 0 6px;
  padding: 8px 0 0 14px;
}

.listbox {
  width: 320px;
  height: 101px;
  margin-top: 4px;
  border: 1px solid #828790;
  background: #fff;
}

.list-item {
  display: flex;
  align-items: center;
  height: 17px;
  padding: 0 1px 0 5px;
}

.users {
  width: 16px;
  height: 13px;
}

.list-sel {
  flex: 1;
  height: 17px;
  line-height: 17px;
  padding-left: 2px;
  background: #0078d7;
  color: #fff;
}

.list-btns {
  display: flex;
  justify-content: flex-end;
  gap: 8px;
  width: 320px;
  padding-right: 2px;
  margin-top: 8px;
}

.perm-head {
  display: flex;
  width: 320px;
  margin-top: 14px;
  line-height: 14px;
  padding-right: 25px;
}

.perm-for {
  flex: 1;
}

.deny {
  margin-left: 37px;
}

.perm-box {
  width: 320px;
  height: 137px;
  margin-top: 2px;
  padding: 3px 35px 0 11px;
  border: 1px solid #7a7a7a;
  background: #fff;
}

.perm-row {
  display: flex;
  align-items: center;
  gap: 47px;
  height: 18px;
}

.perm-name {
  flex: 1;
}

.perm-foot {
  padding: 9px 6px 0 0;
}
```
